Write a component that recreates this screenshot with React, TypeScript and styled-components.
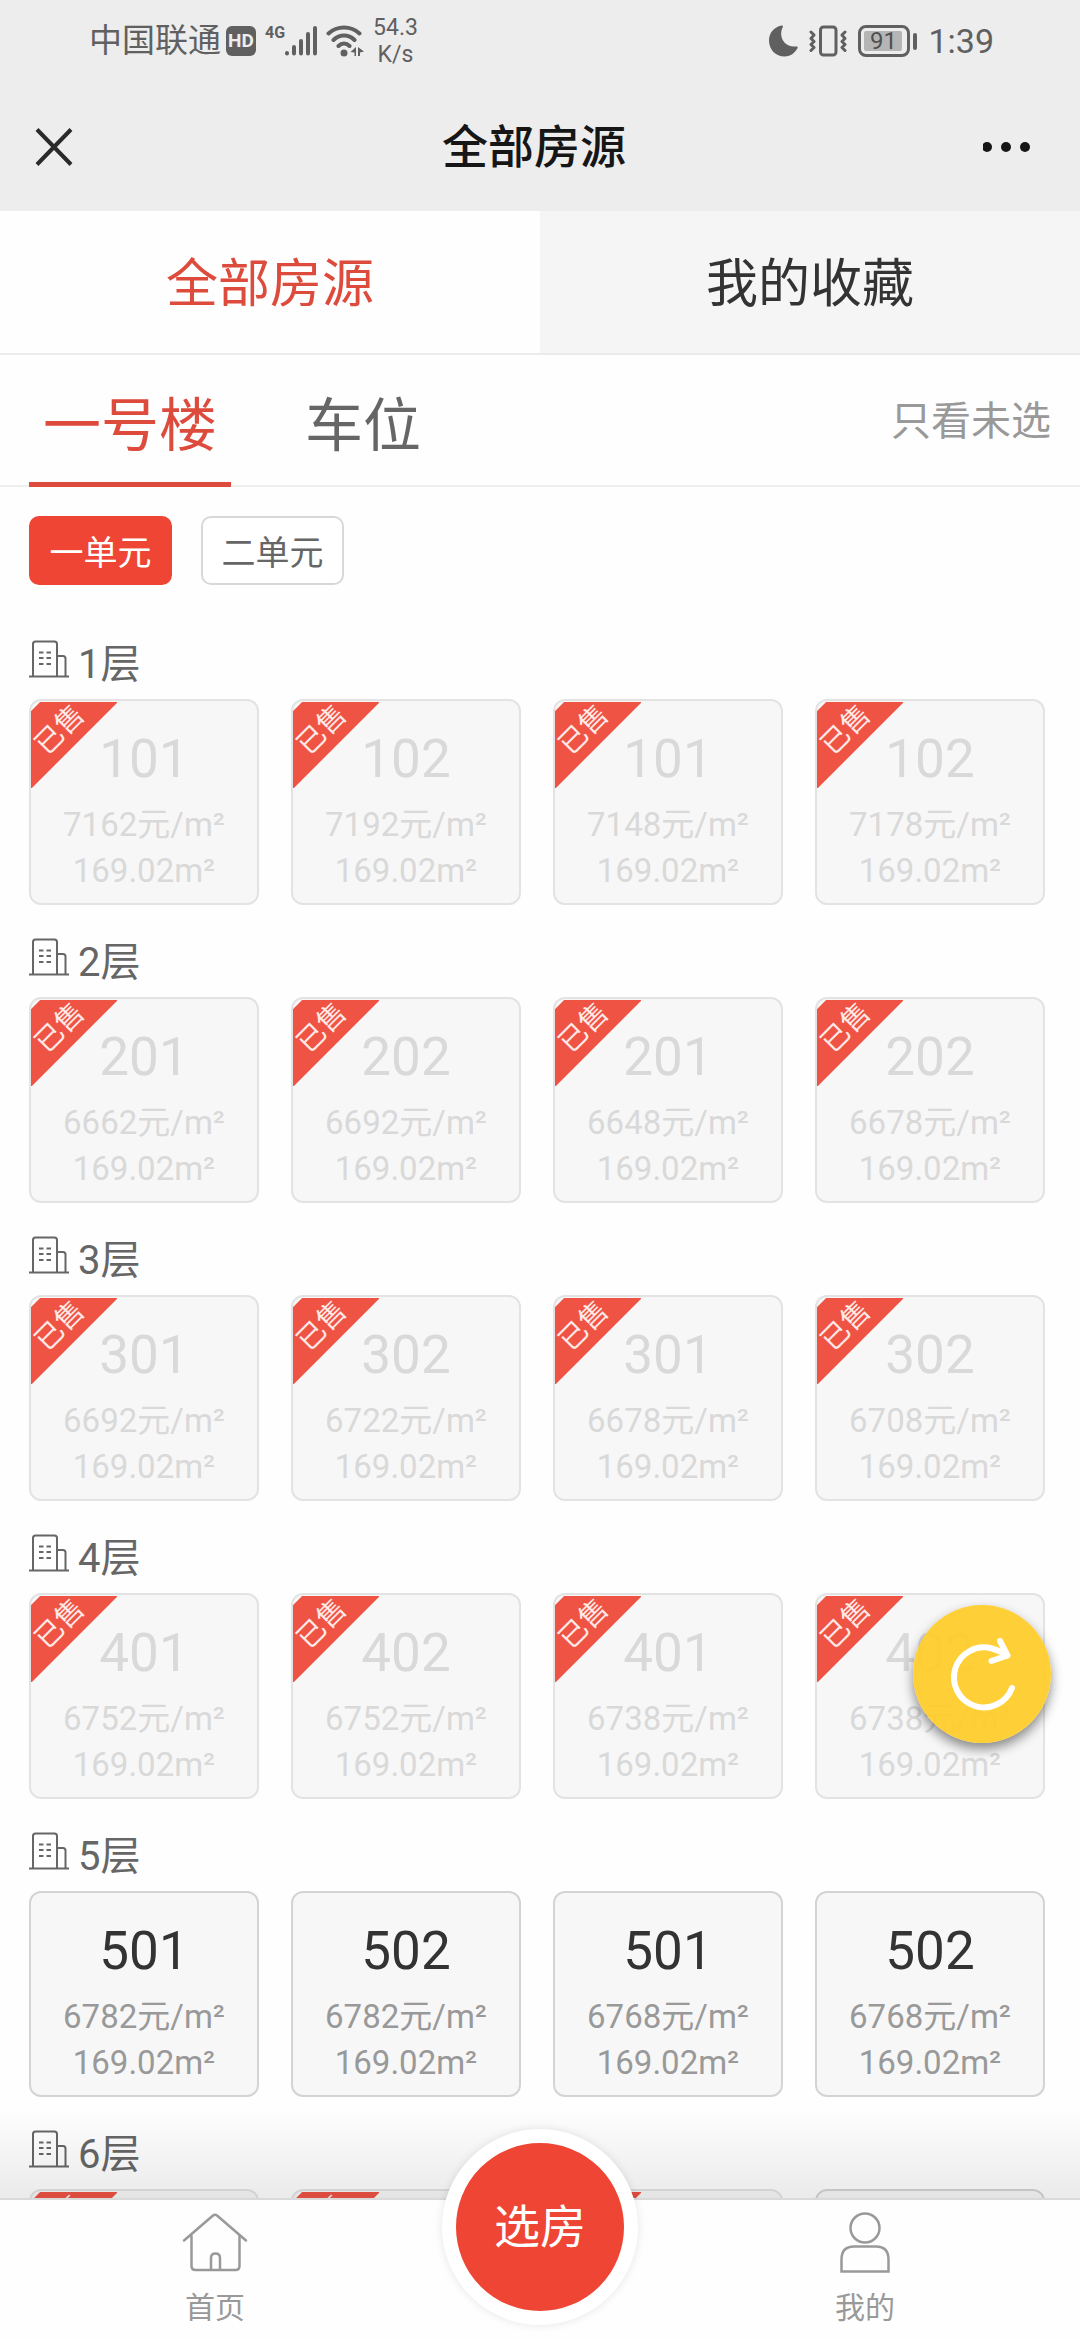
import React, { useState } from "react";
import styled, { createGlobalStyle } from "styled-components";

const GlobalStyle = createGlobalStyle`
  *, *::before, *::after { box-sizing: border-box; }
  body { margin: 0; background: #fff; }
  body, button { font-family: Roboto, "Noto Sans CJK SC", sans-serif; }
  h1, h2, p { margin: 0; font-weight: 400; }
  button { margin: 0; padding: 0; border: 0; background: none; color: inherit; cursor: pointer; }
  svg { display: block; flex: none; }
`;

const Screen = styled.div`
  display: flex;
  flex-direction: column;
  height: 100vh;
  overflow: hidden;
  background: #fefefe;
`;

const TopArea = styled.header`
  flex: none;
  background: #ededed;
`;

const StatusBar = styled.div`
  display: flex;
  justify-content: space-between;
  align-items: center;
  height: 84px;
  padding: 0 86px 2px 89px;
  color: #606060;
`;

const StatusGroup = styled.div<{ $gap: number }>`
  display: flex;
  align-items: center;
  gap: ${(p) => p.$gap}px;
`;

const Carrier = styled.span`
  font-size: 33px;
  line-height: 40px;
`;

const HdBadge = styled.span`
  width: 30px;
  height: 30px;
  margin-left: -4px;
  border-radius: 6px;
  background: #606060;
  color: #ededed;
  font-size: 19px;
  font-weight: 700;
  line-height: 30px;
  text-align: center;
`;

const Signal = styled.span`
  display: flex;
  align-items: flex-start;
`;

const NetworkType = styled.span`
  font-size: 16px;
  font-weight: 700;
  line-height: 16px;
`;

const Speed = styled.span`
  display: flex;
  flex-direction: column;
  align-items: center;
  font-size: 23px;
  line-height: 27px;
`;

const Battery = styled.span`
  display: flex;
  align-items: center;
  gap: 3px;

  &::after {
    content: "";
    width: 4px;
    height: 17px;
    border-radius: 2px;
    background: #606060;
  }
`;

const BatteryBody = styled.span`
  width: 52px;
  height: 32px;
  padding: 3px;
  border: 3px solid #606060;
  border-radius: 8px;
`;

const BatteryLevel = styled.span`
  display: block;
  width: 38px;
  height: 20px;
  border-radius: 2px;
  background: #b5b5b5;
  color: #505050;
  font-size: 24px;
  line-height: 20px;
  text-align: center;
`;

const Clock = styled.time`
  font-size: 34px;
  line-height: 40px;
`;

const TitleBar = styled.div`
  display: grid;
  grid-template-columns: 1fr auto 1fr;
  align-items: center;
  height: 127px;
  padding: 0 47px 2px 35px;
`;

const Title = styled.h1`
  color: #161616;
  font-size: 46px;
  font-weight: 500;
  line-height: 60px;
`;

const IconButton = styled.button<{ $end?: boolean }>`
  justify-self: ${(p) => (p.$end ? "end" : "start")};
`;

const MainTabs = styled.div`
  display: flex;
  flex: none;
  border-bottom: 2px solid #ebebeb;
`;

const MainTab = styled.button<{ $active: boolean }>`
  flex: 1;
  height: 142px;
  padding-bottom: 6px;
  background: ${(p) => (p.$active ? "#fefefe" : "#f5f5f5")};
  color: ${(p) => (p.$active ? "#dd4b3c" : "#333")};
  font-size: 52px;
`;

const BuildingBar = styled.div`
  display: flex;
  flex: none;
  justify-content: space-between;
  height: 132px;
  padding: 0 29px;
  border-bottom: 2px solid #efefef;
`;

const BuildingTabs = styled.div`
  display: flex;
  gap: 60px;
  margin-bottom: -2px;
`;

const BuildingTab = styled.button<{ $active: boolean }>`
  padding: 14px 14px 0;
  border-bottom: 5px solid ${(p) => (p.$active ? "#dd4b3c" : "transparent")};
  color: ${(p) => (p.$active ? "#dd4b3c" : "#666")};
  font-size: 58px;
  line-height: 80px;
`;

const FilterButton = styled.button`
  padding-bottom: 4px;
  color: #999;
  font-size: 40px;
`;

const Content = styled.main`
  flex: 1;
  min-height: 0;
  overflow-y: auto;
  scrollbar-width: none;
  padding: 29px 35px 29px 29px;
`;

const UnitTabs = styled.div`
  display: flex;
  gap: 29px;
  margin-bottom: 22px;
`;

const UnitTab = styled.button<{ $active: boolean }>`
  width: 143px;
  height: 69px;
  border: 2px solid ${(p) => (p.$active ? "#ef4534" : "#d8d8d8")};
  border-radius: 10px;
  background: ${(p) => (p.$active ? "#ef4534" : "#fff")};
  color: ${(p) => (p.$active ? "#fff" : "#666")};
  font-size: 34px;
`;

const FloorTitle = styled.h2`
  display: flex;
  align-items: baseline;
  gap: 9px;
  height: 92px;
  padding-top: 33px;
  color: #666;
  font-size: 40px;
  line-height: 50px;
`;

const RoomGrid = styled.div`
  display: grid;
  grid-template-columns: repeat(4, 1fr);
  gap: 32px;
`;

const RoomCard = styled.button<{ $sold: boolean }>`
  position: relative;
  display: flex;
  flex-direction: column;
  align-items: center;
  justify-content: flex-start;
  min-height: 206px;
  padding: 25px 0 9px;
  border: 2px solid ${(p) => (p.$sold ? "#e3e3e3" : "#d4d4d4")};
  border-radius: 12px;
  background: #f7f7f7;
  color: ${(p) => (p.$sold ? "#d9d9d9" : "#999")};
  overflow: hidden;
`;

const RoomNumber = styled.span<{ $sold: boolean }>`
  margin-bottom: 10px;
  color: ${(p) => (p.$sold ? "#d9d9d9" : "#333")};
  font-size: 53px;
  line-height: 66px;
`;

const RoomDetail = styled.span`
  font-size: 33px;
  line-height: 46px;
`;

const Ribbon = styled.span`
  position: absolute;
  top: 1px;
  left: 0;
  display: flex;
  align-items: center;
  justify-content: center;
  width: 86px;
  height: 86px;
  padding: 0 28px 30px 0;
  background: linear-gradient(135deg, transparent 6px, #ee5344 7px, #ee5344 50%, transparent 51%);
`;

const RibbonText = styled.span`
  flex: none;
  transform: rotate(-45deg);
  color: #ffe9e6;
  font-size: 28px;
  font-weight: 400;
  line-height: 24px;
  white-space: nowrap;
`;

const RefreshButton = styled.button`
  position: fixed;
  right: 29px;
  bottom: 597px;
  width: 138px;
  height: 138px;
  border-radius: 50%;
  background: rgba(255, 204, 44, 0.95);
  box-shadow: 0 6px 12px rgba(0, 0, 0, 0.45);
`;

const BottomNav = styled.nav`
  position: relative;
  display: flex;
  flex: none;
  justify-content: space-between;
  height: 142px;
  border-top: 2px solid #ececec;
  background: #fefefe;

  &::before {
    content: "";
    position: absolute;
    right: 0;
    bottom: 100%;
    left: 0;
    height: 92px;
    background: linear-gradient(rgba(0, 0, 0, 0), rgba(0, 0, 0, 0.08));
    pointer-events: none;
  }
`;

const NavItem = styled.a`
  display: flex;
  flex: 1;
  flex-direction: column;
  align-items: center;
  gap: 16px;
  padding-top: 12px;
  color: #999;
  font-size: 30px;
  line-height: 36px;
  text-decoration: none;
`;

const NavCenter = styled.div`
  display: flex;
  flex: none;
  justify-content: center;
  width: 220px;
`;

const PickButton = styled.button`
  position: relative;
  width: 196px;
  height: 196px;
  margin-top: -71px;
  padding-bottom: 8px;
  border: 14px solid #fff;
  border-radius: 50%;
  background: #ef4534;
  box-shadow: 0 0 10px rgba(0, 0, 0, 0.1);
  color: #fff;
  font-size: 46px;
`;

function SignalIcon() {
  return (
    <svg width="32" height="32" viewBox="0 0 32 32" fill="none" stroke="currentColor" strokeWidth="4" strokeLinecap="round" aria-hidden="true">
      <path d="M2 28v.5M9 22v6.500M16 16v12.500M23 9v19.500M30 3v25.500" />
    </svg>
  );
}

function WifiIcon() {
  return (
    <svg width="38" height="32" viewBox="0 0 38 32" fill="none" stroke="currentColor" strokeWidth="4" strokeLinecap="round" aria-hidden="true">
      <path d="M2.500 8.500Q9 2.500 18 2.500T33.500 8.500M7.500 15Q12 10.500 18 10.500T28.500 15M12.500 21Q15 18.500 18 18.500T23.500 21" />
      <circle cx="18" cy="28" r="3.500" fill="currentColor" stroke="none" />
      <path d="M30 22v9h-1.500v-3.500L24.500 27zM32 22l6 4.500-4 1v3.500h-2z" fill="currentColor" stroke="none" />
    </svg>
  );
}

function MoonIcon() {
  return (
    <svg width="29" height="32" viewBox="0 0 29 32" fill="currentColor" aria-hidden="true">
      <path d="M12.500.5C14 .2 14.300 1.200 13.700 2.300C9 12 15.500 22.500 26.500 21.500C28.500 21.300 29.300 22 28.300 23.500C25.500 28.500 21 31.500 15.500 31.500C6.500 31.500 0 24.500 0 15.500C0 8 5 2 12.500.5z" />
    </svg>
  );
}

function VibrateIcon() {
  return (
    <svg width="38" height="32" viewBox="0 0 38 32" fill="none" stroke="currentColor" strokeWidth="3" strokeLinejoin="round" strokeLinecap="round" aria-hidden="true">
      <rect x="11.500" y="2" width="15.500" height="28" rx="3" />
      <path d="M2 7l3 3-3 3.500 3 3-3 3 3 3-3 3M36 7l-3 3 3 3.500-3 3 3 3-3 3 3 3" />
    </svg>
  );
}

function CloseIcon() {
  return (
    <svg width="38" height="38" viewBox="0 0 38 38" stroke="#2a2a2a" strokeWidth="4" aria-hidden="true">
      <path d="M2 1.500l34 35M36 1.500l-34 35" />
    </svg>
  );
}

function MoreIcon() {
  return (
    <svg width="50" height="12" viewBox="0 0 50 12" fill="#161616" aria-hidden="true">
      <circle cx="4" cy="6" r="5" />
      <circle cx="23" cy="6" r="5" />
      <circle cx="42" cy="6" r="5" />
    </svg>
  );
}

function BuildingIcon() {
  return (
    <svg width="40" height="38" viewBox="0 0 40 38" fill="none" stroke="currentColor" strokeWidth="2" aria-hidden="true">
      <path d="M0 36.500h40M4 36V4q0-2.500 2.500-2.500h19Q28 1.500 28 4v32M28 16h6q2.500 0 2.500 2.500V36" />
      <path d="M10 12.500h4.500M17.500 12.500H22M10 18h4.500M17.500 18H22M10 24h4.500M17.500 24H22" />
    </svg>
  );
}

function RefreshIcon() {
  return (
    <svg width="138" height="138" viewBox="0 0 138 138" fill="none" stroke="#fff" strokeWidth="6" strokeLinecap="round" strokeLinejoin="round" aria-hidden="true">
      <path d="M99 83A30 30 0 1 1 79 43.500Q87 45.500 94 50.500" />
      <path d="M87 36l7.500 14.500L78.500 56" />
    </svg>
  );
}

function HomeIcon() {
  return (
    <svg width="66" height="62" viewBox="0 0 66 62" fill="none" stroke="currentColor" strokeWidth="2.500" strokeLinecap="round" strokeLinejoin="round" aria-hidden="true">
      <path d="M2 28.500L31 3.500q2-1.500 4 0l29 25" />
      <path d="M9.500 24v30q0 4 4 4h40q4 0 4-4V24M29 58V46q0-4.500 4.500-4.500T38 46v12" />
    </svg>
  );
}

function PersonIcon() {
  return (
    <svg width="66" height="62" viewBox="0 0 66 62" fill="none" stroke="currentColor" strokeWidth="2.500" aria-hidden="true">
      <circle cx="33" cy="16" r="14.500" />
      <path d="M9.500 59.500V47.500Q9.500 34.500 22 34.500H44Q56.500 34.500 56.500 47.500V59.500z" />
    </svg>
  );
}

type Floor = { level: number; prices: (number | null)[]; sold: boolean[] };

const ALL = [true, true, true, true];
const NONE = [false, false, false, false];

const floors: Floor[] = [
  { level: 1, prices: [7162, 7192, 7148, 7178], sold: ALL },
  { level: 2, prices: [6662, 6692, 6648, 6678], sold: ALL },
  { level: 3, prices: [6692, 6722, 6678, 6708], sold: ALL },
  { level: 4, prices: [6752, 6752, 6738, 6738], sold: ALL },
  { level: 5, prices: [6782, 6782, 6768, 6768], sold: NONE },
  { level: 6, prices: [null, null, null, null], sold: [true, true, true, false] },
];

export default function App() {
  const [tab, setTab] = useState("全部房源");
  const [building, setBuilding] = useState("一号楼");
  const [unit, setUnit] = useState("一单元");

  return (
    <Screen>
      <GlobalStyle />
      <TopArea>
        <StatusBar>
          <StatusGroup $gap={9}>
            <Carrier>中国联通</Carrier>
            <HdBadge>HD</HdBadge>
            <Signal>
              <NetworkType>4G</NetworkType>
              <SignalIcon />
            </Signal>
            <WifiIcon />
            <Speed>
              <span>54.3</span>
              <span>K/s</span>
            </Speed>
          </StatusGroup>
          <StatusGroup $gap={11}>
            <MoonIcon />
            <VibrateIcon />
            <Battery>
              <BatteryBody>
                <BatteryLevel>91</BatteryLevel>
              </BatteryBody>
            </Battery>
            <Clock>1:39</Clock>
          </StatusGroup>
        </StatusBar>
        <TitleBar>
          <IconButton aria-label="关闭">
            <CloseIcon />
          </IconButton>
          <Title>全部房源</Title>
          <IconButton $end aria-label="更多">
            <MoreIcon />
          </IconButton>
        </TitleBar>
      </TopArea>

      <MainTabs>
        {["全部房源", "我的收藏"].map((name) => (
          <MainTab key={name} $active={tab === name} onClick={() => setTab(name)}>
            {name}
          </MainTab>
        ))}
      </MainTabs>

      <BuildingBar>
        <BuildingTabs>
          {["一号楼", "车位"].map((name) => (
            <BuildingTab key={name} $active={building === name} onClick={() => setBuilding(name)}>
              {name}
            </BuildingTab>
          ))}
        </BuildingTabs>
        <FilterButton>只看未选</FilterButton>
      </BuildingBar>

      <Content>
        <UnitTabs>
          {["一单元", "二单元"].map((name) => (
            <UnitTab key={name} $active={unit === name} onClick={() => setUnit(name)}>
              {name}
            </UnitTab>
          ))}
        </UnitTabs>
        {floors.map(({ level, prices, sold }) => (
          <section key={level}>
            <FloorTitle>
              <BuildingIcon />
              <span>{level}层</span>
            </FloorTitle>
            <RoomGrid>
              {prices.map((price, i) => (
                <RoomCard key={i} $sold={sold[i]} disabled={sold[i]}>
                  {sold[i] && (
                    <Ribbon>
                      <RibbonText>已售</RibbonText>
                    </Ribbon>
                  )}
                  <RoomNumber $sold={sold[i]}>{`${level}0${(i % 2) + 1}`}</RoomNumber>
                  {price !== null && (
                    <>
                      <RoomDetail>{`${price}元/m²`}</RoomDetail>
                      <RoomDetail>169.02m²</RoomDetail>
                    </>
                  )}
                </RoomCard>
              ))}
            </RoomGrid>
          </section>
        ))}
      </Content>

      <RefreshButton aria-label="刷新">
        <RefreshIcon />
      </RefreshButton>

      <BottomNav>
        <NavItem href="#home">
          <HomeIcon />
          <span>首页</span>
        </NavItem>
        <NavCenter>
          <PickButton>选房</PickButton>
        </NavCenter>
        <NavItem href="#mine">
          <PersonIcon />
          <span>我的</span>
        </NavItem>
      </BottomNav>
    </Screen>
  );
}
